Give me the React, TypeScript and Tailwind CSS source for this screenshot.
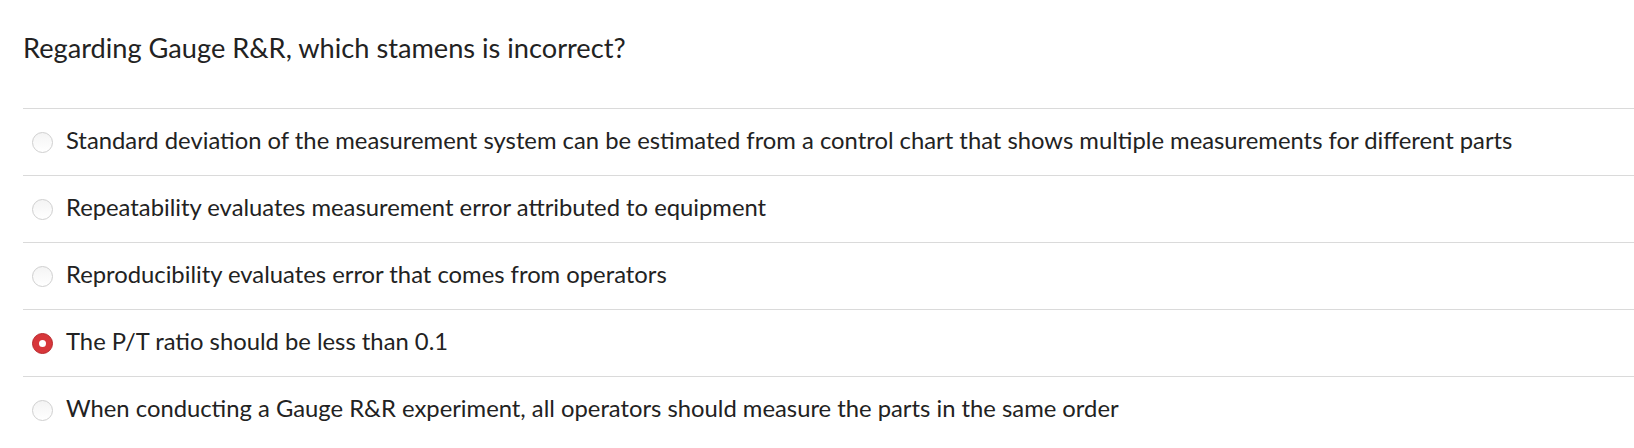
const OPTIONS = [
  'Standard deviation of the measurement system can be estimated from a control chart that shows multiple measurements for different parts',
  'Repeatability evaluates measurement error attributed to equipment',
  'Reproducibility evaluates error that comes from operators',
  'The P/T ratio should be less than 0.1',
  'When conducting a Gauge R&R experiment, all operators should measure the parts in the same order',
]

const SELECTED = 3

function Radio({ checked }: { checked: boolean }) {
  if (checked) {
    return (
      <span className="mt-[6px] flex h-[21px] w-[21px] flex-none items-center justify-center rounded-full border border-[#b8282c] bg-[#d7363a]">
        <span className="h-[7px] w-[7px] rounded-full bg-white" />
      </span>
    )
  }
  return (
    <span className="mt-[6px] h-[21px] w-[21px] flex-none rounded-full border border-[#cfcfcf] bg-gradient-to-b from-[#f4f4f4] to-white" />
  )
}

export default function App() {
  return (
    <div className="min-h-[448px] bg-white pl-[23px] text-[#222]" style={{ fontFamily: 'Lato, "Open Sans", sans-serif' }}>
      <div className="flex h-[108px] items-start pt-[31px]">
        <h1 className="text-[27.2px] leading-[34px] font-normal">Regarding Gauge R&amp;R, which stamens is incorrect?</h1>
      </div>
      {OPTIONS.map((opt, i) => (
        <label key={i} className="flex h-[67px] items-center gap-[13px] border-t border-[#dadada] pb-[5px] pl-[9px]">
          <Radio checked={i === SELECTED} />
          <span className="text-[23.8px] leading-[30px]">{opt}</span>
        </label>
      ))}
    </div>
  )
}
